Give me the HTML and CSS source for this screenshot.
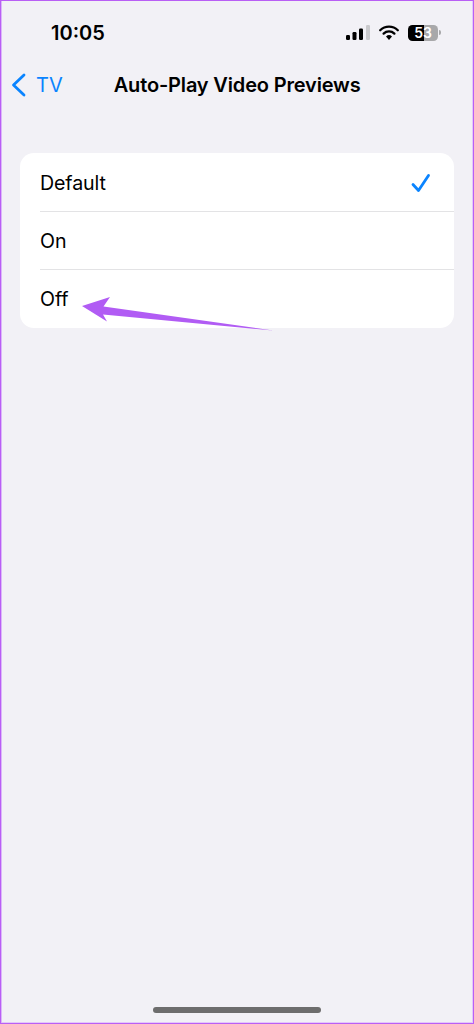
FILE: index.html
```html
<!DOCTYPE html>
<html lang="en">
<head>
<meta charset="UTF-8" />
<meta name="viewport" content="width=device-width, initial-scale=1.0" />
<title>Auto-Play Video Previews</title>
<link rel="stylesheet" href="styles.css">
</head>
<body>

<div class="screen">
  <!-- status bar -->
  <div class="status">
    <span class="time">10:05</span>
    <div class="status-icons">
      <svg class="signal" width="24" height="15" viewBox="0 0 24 15">
        <rect x="0" y="10" width="4" height="5" rx="1.2" fill="#000"/>
        <rect x="6.500" y="7" width="4" height="8" rx="1.2" fill="#000"/>
        <rect x="13" y="3.500" width="4" height="11.500" rx="1.2" fill="#000"/>
        <rect x="20" y="0" width="4" height="15" rx="1.2" fill="#c9c9cc"/>
      </svg>
      <svg class="wifi" width="20" height="15" viewBox="0 0 20 15">
        <path d="M1.200 5.200a12.600 12.600 0 0 1 17.600 0" fill="none" stroke="#000" stroke-width="2.300" stroke-linecap="round"/>
        <path d="M4.600 8.600a7.800 7.800 0 0 1 10.800 0" fill="none" stroke="#000" stroke-width="2.300" stroke-linecap="round"/>
        <path d="M10 15l-3-3.600a4.400 4.400 0 0 1 6 0z" fill="#000"/>
      </svg>
      <div class="battery">
        <div class="battery-body"><span>53</span></div>
        <div class="battery-nub"></div>
      </div>
    </div>
  </div>

  <!-- nav -->
  <div class="nav">
    <div class="back">
      <svg width="15" height="24" viewBox="0 0 15 24">
        <path d="M13 2L2.500 12L13 22" fill="none" stroke="#0a84ff" stroke-width="2.800" stroke-linecap="round" stroke-linejoin="round"/>
      </svg>
      <span>TV</span>
    </div>
    <div class="title">Auto-Play Video Previews</div>
  </div>

  <div class="list">
    <div class="row">
      <span>Default</span>
      <svg width="20" height="20" viewBox="0 0 20 20">
        <path d="M2 11.500L7.500 17.500L17.500 2.500" fill="none" stroke="#0a84ff" stroke-width="2.800" stroke-linecap="round" stroke-linejoin="round"/>
      </svg>
    </div>
    <div class="row"><span>On</span></div>
    <div class="row"><span>Off</span></div>
  </div>

  <div class="home-bar"></div>

  <!-- стрелка поверх списка -->
  <svg class="arrow" width="200" height="44" viewBox="0 0 200 44">
    <path d="M2 16L30 7L23.500 16.500L193 40.500L23 24.500L27 31.500Z" fill="#b15cf4"/>
  </svg>
</div>

</body>
</html>
```

FILE: styles.css
```css
body {
  margin: 0;
  font-family: 'Inter', 'Liberation Sans', sans-serif;
  color: #000;
}

.screen {
  position: relative;
  box-sizing: border-box;
  width: 474px;
  height: 1024px;
  display: flex;
  flex-direction: column;
  background: #f2f1f6;
  border: 1px solid #b95ff5;
  box-shadow: inset 1px 0 0 #dcb6f9, inset -1px -1px 0 #e4c8fa;
  overflow: hidden;
}

.status {
  height: 53px;
  padding: 0 32px 0 50px;
  display: flex;
  justify-content: space-between;
  align-items: center;
  margin-top: 5px;
}

.time {
  font-size: 20px;
  font-weight: 600;
}

.status-icons {
  display: flex;
  align-items: center;
  gap: 9px;
}

.battery {
  display: flex;
  align-items: center;
}

.battery-body {
  width: 30px;
  height: 16px;
  border-radius: 4.5px;
  background: linear-gradient(90deg, #000 53%, #a8a8aa 53%);
  color: #fff;
  font-size: 14px;
  font-weight: 600;
  line-height: 16px;
  text-align: center;
}

.battery-nub {
  width: 2px;
  height: 5px;
  margin-left: 1px;
  border-radius: 0 2px 2px 0;
  background: #a8a8aa;
}

.nav {
  height: 54px;
  display: flex;
  align-items: center;
  position: relative;
  margin-top: -1px;
}

.back {
  display: flex;
  align-items: center;
  gap: 10px;
  padding-left: 10px;
  color: #0a84ff;
  font-size: 20px;
}

.title {
  margin-left: 51px;
  font-size: 20px;
  font-weight: 600;
  letter-spacing: -0.16px;
}

.list {
  margin: 41px 19px 0;
  padding-top: 1px;
  background: #fff;
  border-radius: 14px;
}

.row {
  box-sizing: border-box;
  height: 58px;
  margin-left: 20px;
  padding-right: 23px;
  display: flex;
  justify-content: space-between;
  align-items: center;
  font-size: 19.6px;
  letter-spacing: -0.1px;
  border-bottom: 1px solid #e3e3e5;
}

.row:last-child {
  border-bottom: none;
}

.home-bar {
  width: 168px;
  height: 6px;
  margin: auto auto 10px;
  border-radius: 3px;
  background: #6d6d6d;
}

.arrow {
  position: absolute;
  left: 79px;
  top: 289px;
}
```
